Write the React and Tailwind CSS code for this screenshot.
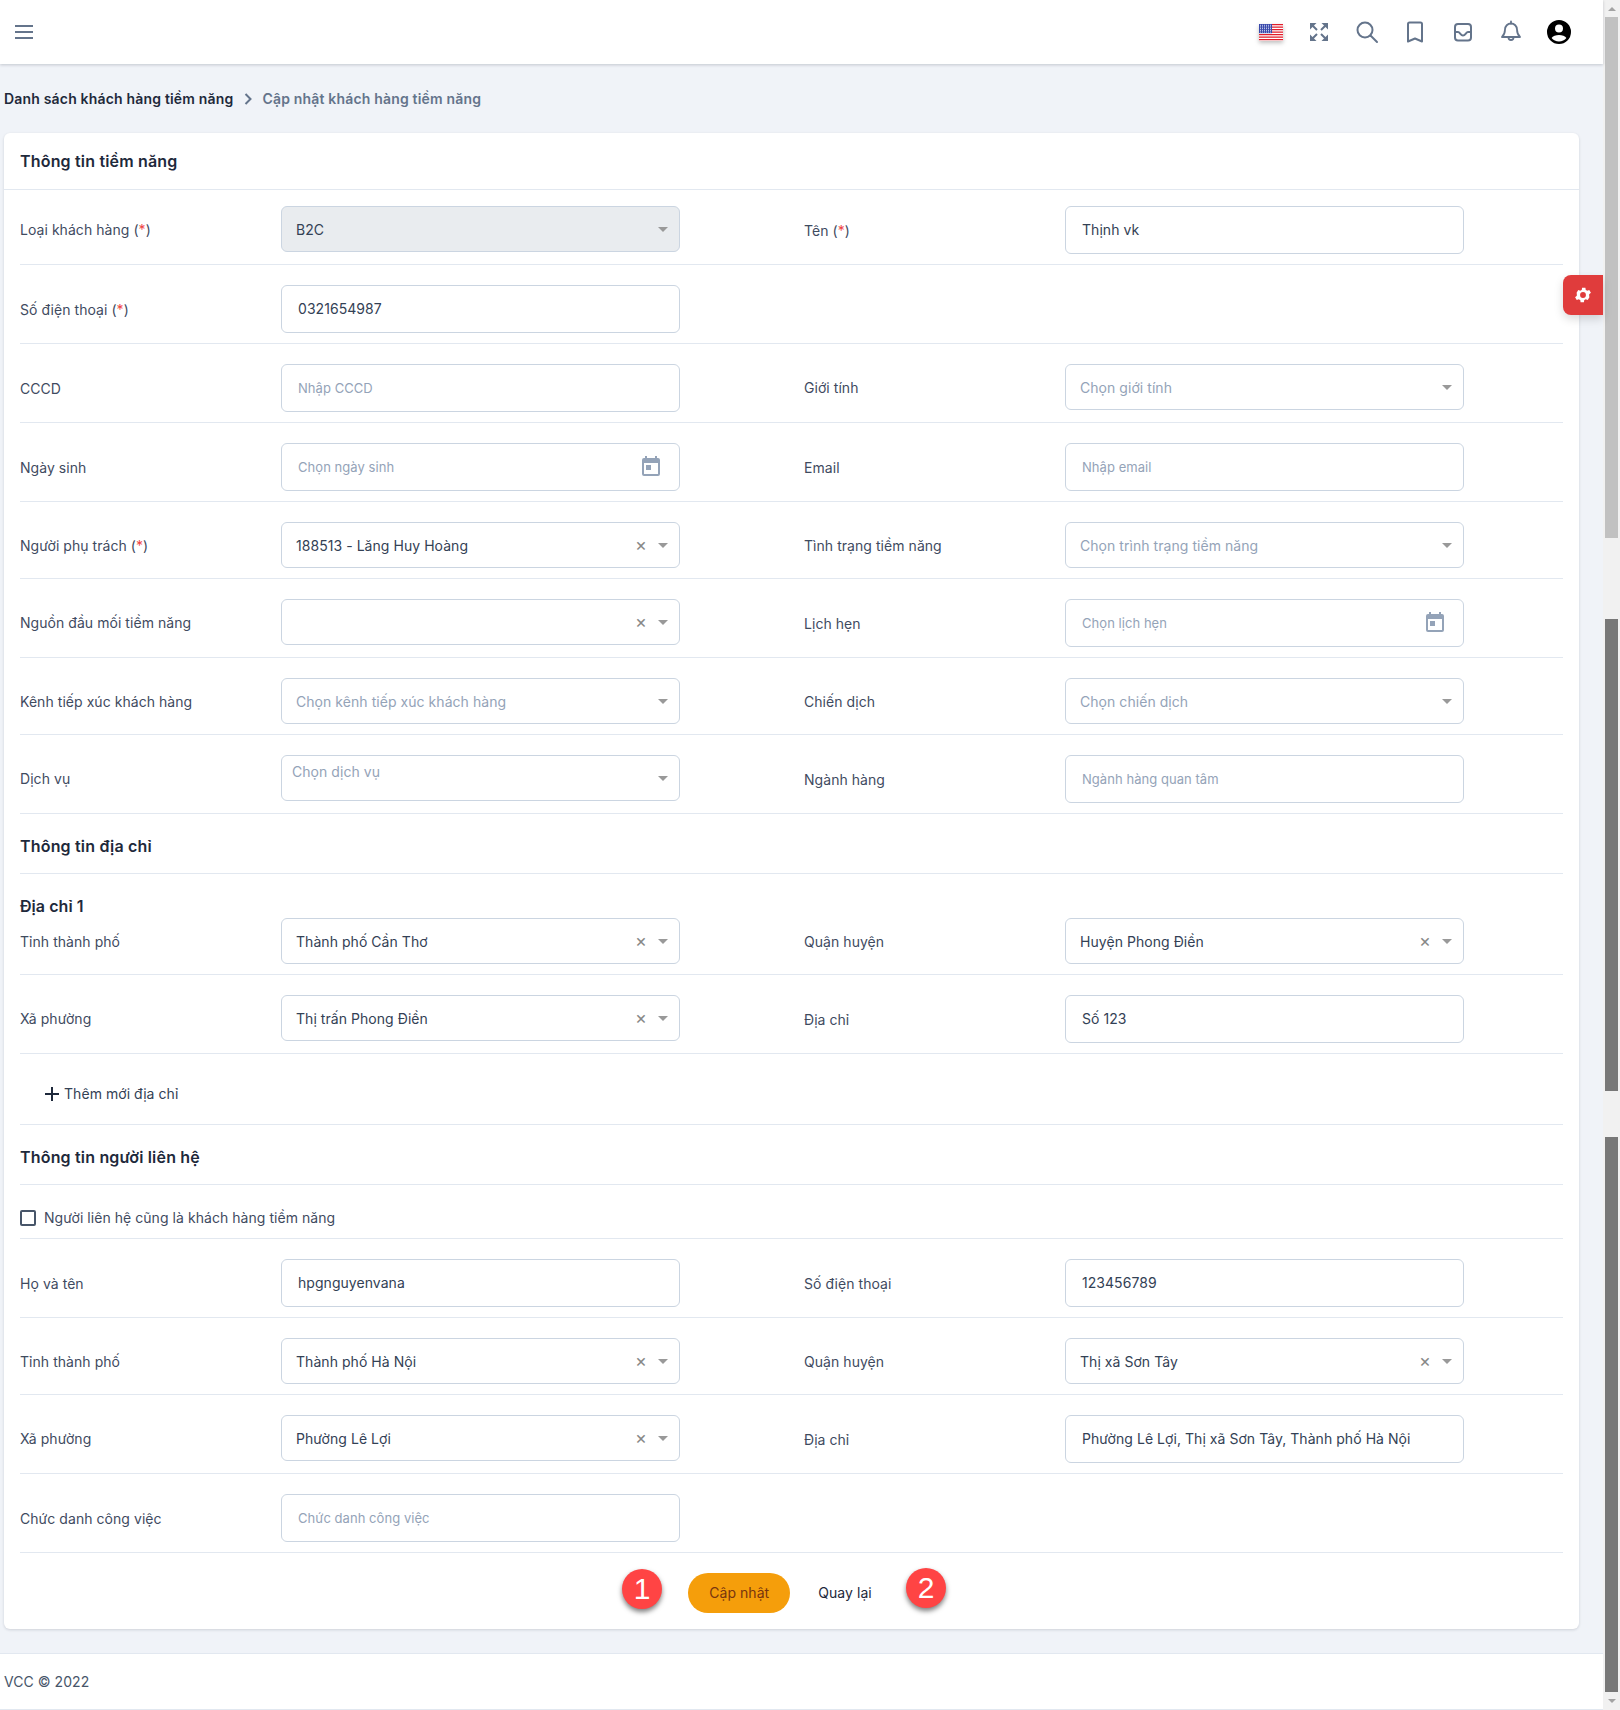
const caret = "w-0 h-0 border-x-[5px] border-x-transparent border-t-[5px] border-t-[#999] shrink-0";

function Req() {
  return <span>(<span className="text-[#ef4444]">*</span>)</span>;
}

function Calendar() {
  return (
    <svg viewBox="0 0 24 24" className="w-[24px] h-[24px] text-[#94a3b8]" fill="currentColor">
      <path d="M19 4h-1V2h-2v2H8V2H6v2H5a2 2 0 0 0-2 2v14a2 2 0 0 0 2 2h14a2 2 0 0 0 2-2V6a2 2 0 0 0-2-2zm0 16H5V9h14v11zM7 11h5v5H7z" />
    </svg>
  );
}

function Input({ value, placeholder, date }) {
  return (
    <div className="relative w-full">
      <input
        readOnly
        value={value || ""}
        placeholder={placeholder}
        className="block w-full h-12 rounded-md border border-[#cbd5e1] bg-white pl-4 pr-4 pb-[2px] text-sm tracking-[0.05px] text-[#334155] outline-none placeholder:text-[13px] placeholder:text-[#94a3b8]"
      />
      {date && (
        <div className="absolute right-[17px] top-[11px]">
          <Calendar />
        </div>
      )}
    </div>
  );
}

function Select({ value, placeholder, clear, disabled, multi }) {
  return (
    <div
      className={`relative flex h-[46px] w-full items-center rounded-md border border-[#cbd5e1] ${
        disabled ? "bg-[#e9ecef]" : "bg-white"
      } ${multi ? "pl-[10px]" : "pl-[14px]"} pr-[11px]`}
    >
      <span
        className={`flex-1 text-sm ${value ? "text-[#334155]" : "text-[#94a3b8]"} ${multi ? "-mt-[12px]" : "pt-[1px]"}`}
      >
        {value || placeholder}
      </span>
      {clear && <span className="mr-[11px] text-[18px] leading-none text-[#888]">×</span>}
      <span className={caret} />
    </div>
  );
}

function Cell({ label, children }) {
  return (
    <div className="grid grid-cols-[261px_399px] items-center">
      <div className="pt-0.5 text-sm text-[#3f4b5f]">{label}</div>
      <div>{children}</div>
    </div>
  );
}

function Row({ left, right, first }) {
  return (
    <div className={`grid grid-cols-[784px_1fr] items-start border-b border-[#e2e8f0] pb-2.5 ${first ? "pt-4" : "pt-5"}`}>
      {left}
      {right || <div />}
    </div>
  );
}

function SectionTitle({ children }) {
  return (
    <div className="flex h-[60px] items-center border-b border-[#e2e8f0] pt-[5px] text-base font-semibold tracking-[0.18px] text-[#1e293b]">
      {children}
    </div>
  );
}

function Icon({ children, className = "w-6 h-6", strokeWidth = "2" }) {
  return (
    <svg viewBox="0 0 24 24" className={className} fill="none" stroke="currentColor" strokeWidth={strokeWidth} strokeLinecap="round" strokeLinejoin="round">
      {children}
    </svg>
  );
}

function Flag() {
  const stripes = [];
  for (let i = 0; i < 7; i++) {
    stripes.push(<rect key={i} x="0" y={i * 2.5} width="24" height="1.25" fill="#e11d2a" />);
  }
  const dots = [];
  for (let r = 0; r < 5; r++) {
    for (let c = 0; c < 6; c++) {
      dots.push(<rect key={`${r}-${c}`} x={1 + c * 2} y={0.8 + r * 1.7} width="1" height="0.9" fill="#dbe2f5" />);
    }
  }
  return (
    <svg viewBox="0 0 24 17" className="h-[17px] w-6 drop-shadow-[0_2px_2px_rgba(0,0,0,0.25)]">
      <rect width="24" height="17" fill="#fff" />
      {stripes}
      <rect width="13" height="9.2" fill="#3949ab" />
      {dots}
    </svg>
  );
}

function Header() {
  const slot = "flex w-12 justify-center text-[#64748b]";
  return (
    <header className="flex h-16 shrink-0 items-center justify-between bg-white pl-[15px] pr-[20px] shadow-[0_1px_3px_rgba(15,23,42,0.2)]">
      <svg viewBox="0 0 18 14" className="h-[14px] w-[18px] text-[#64748b]" stroke="currentColor" strokeWidth="2">
        <path d="M0 1h18M0 7h18M0 13h18" />
      </svg>
      <div className="flex items-center">
        <div className={slot}><Flag /></div>
        <div className={slot}>
          <svg viewBox="0 0 18 18" className="h-[18px] w-[18px]" fill="currentColor" stroke="currentColor" strokeWidth="2">
            <path d="M0 0h6.500L0 6.500z" stroke="none" />
            <path d="M18 0h-6.500L18 6.500z" stroke="none" />
            <path d="M0 18h6.500L0 11.500z" stroke="none" />
            <path d="M18 18h-6.500L18 11.500z" stroke="none" />
            <path d="M2 2l5 5M16 2l-5 5M2 16l5-5M16 16l-5-5" fill="none" />
          </svg>
        </div>
        <div className={slot}>
          <Icon>
            <circle cx="10" cy="10" r="7.500" />
            <path d="M15.500 15.500l6.500 6.500" />
          </Icon>
        </div>
        <div className={slot}>
          <Icon>
            <path d="M5 21.500V4a1.500 1.500 0 0 1 1.500-1.500h11A1.500 1.500 0 0 1 19 4v17.500l-7-3z" />
          </Icon>
        </div>
        <div className={slot}>
          <Icon>
            <rect x="4" y="4" width="16" height="16.500" rx="3" />
            <path d="M4 12h3c2 0 2.500 3.500 5 3.500s3-3.500 5-3.500h3" />
          </Icon>
        </div>
        <div className={slot}>
          <Icon strokeWidth="1.8">
            <path d="M12 3.500a6 6 0 0 0-6 6c0 4.500-2 6.500-3 7.500h18c-1-1-3-3-3-7.500a6 6 0 0 0-6-6z" />
            <path d="M9.500 17.500a2.500 2.500 0 0 0 5 0M12 1.500v2" />
          </Icon>
        </div>
        <div className="flex w-12 justify-center">
          <svg viewBox="0 0 24 24" className="h-6 w-6" fill="#000">
            <path d="M12 0a12 12 0 1 0 0 24 12 12 0 0 0 0-24zm0 4.600a4 4 0 1 1 0 8 4 4 0 0 1 0-8zm0 17c-3 0-5.700-1.400-7.400-3.600 1-2 4.500-3.100 7.400-3.100s6.400 1.100 7.400 3.100c-1.700 2.200-4.400 3.600-7.400 3.600z" />
          </svg>
        </div>
      </div>
    </header>
  );
}

function Badge({ children, className }) {
  return (
    <div
      className={`absolute flex h-10 w-10 items-center justify-center rounded-full bg-[#ff4444] text-[30px] leading-none text-white shadow-[0_3px_5px_rgba(0,0,0,0.5)] [font-family:'Liberation_Sans',sans-serif] ${className}`}
    >
      {children}
    </div>
  );
}

function Scrollbar() {
  return (
    <div className="flex w-[17px] shrink-0 flex-col items-start bg-[#f1f1f1] pl-[2px]">
      <div className="flex h-[17px] w-[13px] items-center justify-center">
        <span className="h-0 w-0 border-x-[4px] border-b-[4px] border-x-transparent border-b-[#a3a3a3]" />
      </div>
      <div className="h-[521px] w-[13px] bg-[#c1c1c1]" />
      <div className="mt-[81px] h-[472px] w-[13px] bg-[#787878]" />
      <div className="mt-[46px] h-[555px] w-[13px] bg-[#787878]" />
      <div className="flex h-[17px] w-[13px] items-center justify-center">
        <span className="h-0 w-0 border-x-[4px] border-t-[4px] border-x-transparent border-t-[#a3a3a3]" />
      </div>
    </div>
  );
}

export default function App() {
  return (
    <div className="flex h-[1710px] w-full overflow-hidden bg-[#f0f3f8] text-sm tracking-[0.05px] [font-family:Inter,sans-serif]">
      <div className="relative flex min-w-0 flex-1 flex-col">
        <Header />

        <nav className="flex h-[69px] shrink-0 items-center pl-1 pt-[1px] text-sm font-semibold tracking-[0.18px]">
          <span className="text-[#1e293b]">Danh sách khách hàng tiềm năng</span>
          <svg viewBox="0 0 8 12" className="ml-[11px] mr-[10px] h-[12px] w-[8px] text-[#64748b]" fill="none" stroke="currentColor" strokeWidth="2">
            <path d="M1.500 1l5 5-5 5" />
          </svg>
          <span className="text-[#64748b]">Cập nhật khách hàng tiềm năng</span>
        </nav>

        <section className="ml-1 w-[1575px] rounded-md bg-white shadow-[0_1px_3px_rgba(15,23,42,0.15)]">
          <div className="flex h-[57px] items-center border-b border-[#e2e8f0] px-4 text-base font-semibold tracking-[0.18px] text-[#1e293b]">
            Thông tin tiềm năng
          </div>

          <div className="px-4">
            <Row
              first
              left={<Cell label={<>Loại khách hàng <Req /></>}><Select value="B2C" disabled /></Cell>}
              right={<Cell label={<>Tên <Req /></>}><Input value="Thịnh vk" /></Cell>}
            />
            <Row left={<Cell label={<>Số điện thoại <Req /></>}><Input value="0321654987" /></Cell>} />
            <Row
              left={<Cell label="CCCD"><Input placeholder="Nhập CCCD" /></Cell>}
              right={<Cell label="Giới tính"><Select placeholder="Chọn giới tính" /></Cell>}
            />
            <Row
              left={<Cell label="Ngày sinh"><Input placeholder="Chọn ngày sinh" date /></Cell>}
              right={<Cell label="Email"><Input placeholder="Nhập email" /></Cell>}
            />
            <Row
              left={<Cell label={<>Người phụ trách <Req /></>}><Select value="188513 - Lăng Huy Hoàng" clear /></Cell>}
              right={<Cell label="Tình trạng tiềm năng"><Select placeholder="Chọn trình trạng tiềm năng" /></Cell>}
            />
            <Row
              left={<Cell label="Nguồn đầu mối tiềm năng"><Select clear /></Cell>}
              right={<Cell label="Lịch hẹn"><Input placeholder="Chọn lịch hẹn" date /></Cell>}
            />
            <Row
              left={<Cell label="Kênh tiếp xúc khách hàng"><Select placeholder="Chọn kênh tiếp xúc khách hàng" /></Cell>}
              right={<Cell label="Chiến dịch"><Select placeholder="Chọn chiến dịch" /></Cell>}
            />
            <Row
              left={<Cell label="Dịch vụ"><Select placeholder="Chọn dịch vụ" multi /></Cell>}
              right={<Cell label="Ngành hàng"><Input placeholder="Ngành hàng quan tâm" /></Cell>}
            />

            <SectionTitle>Thông tin địa chỉ</SectionTitle>

            <div className="flex h-[44px] items-end text-base font-semibold text-[#1e293b]">Địa chỉ 1</div>
            <div className="grid grid-cols-[784px_1fr] items-start border-b border-[#e2e8f0] pb-2.5">
              <Cell label="Tỉnh thành phố"><Select value="Thành phố Cần Thơ" clear /></Cell>
              <Cell label="Quận huyện"><Select value="Huyện Phong Điền" clear /></Cell>
            </div>
            <Row
              left={<Cell label="Xã phường"><Select value="Thị trấn Phong Điền" clear /></Cell>}
              right={<Cell label="Địa chỉ"><Input value="Số 123" /></Cell>}
            />

            <div className="flex h-[71px] items-center gap-[5px] border-b border-[#e2e8f0] pl-[25px] pt-[10px] text-sm text-[#334155]">
              <svg viewBox="0 0 14 14" className="h-[14px] w-[14px] text-[#1e293b]" stroke="currentColor" strokeWidth="2">
                <path d="M7 0v14M0 7h14" />
              </svg>
              Thêm mới địa chỉ
            </div>

            <SectionTitle>Thông tin người liên hệ</SectionTitle>

            <label className="flex h-[54px] items-center gap-[8px] border-b border-[#e2e8f0] pt-[12px] text-sm text-[#3f4b5f]">
              <span className="h-4 w-4 rounded-[2px] border-2 border-[#475569] bg-white" />
              Người liên hệ cũng là khách hàng tiềm năng
            </label>

            <Row
              left={<Cell label="Họ và tên"><Input value="hpgnguyenvana" /></Cell>}
              right={<Cell label="Số điện thoại"><Input value="123456789" /></Cell>}
            />
            <Row
              left={<Cell label="Tỉnh thành phố"><Select value="Thành phố Hà Nội" clear /></Cell>}
              right={<Cell label="Quận huyện"><Select value="Thị xã Sơn Tây" clear /></Cell>}
            />
            <Row
              left={<Cell label="Xã phường"><Select value="Phường Lê Lợi" clear /></Cell>}
              right={<Cell label="Địa chỉ"><Input value="Phường Lê Lợi, Thị xã Sơn Tây, Thành phố Hà Nội" /></Cell>}
            />
            <Row left={<Cell label="Chức danh công việc"><Input placeholder="Chức danh công việc" /></Cell>} />

            <div className="relative flex h-[76px] items-center justify-center gap-[28px] pr-[23px] pt-[4px]">
              <Badge className="left-[602px] top-[16px]">1</Badge>
              <button className="h-10 w-[102px] rounded-full bg-[#f59e0b] text-sm text-[#78350f]">Cập nhật</button>
              <button className="text-sm text-[#1e293b]">Quay lại</button>
              <Badge className="left-[886px] top-[15px]">2</Badge>
            </div>
          </div>
        </section>

        <footer className="mt-[24px] flex flex-1 items-center border-y border-[#e2e8f0] bg-white pl-1 text-sm text-[#475569]">
          VCC © 2022
        </footer>

        <div className="absolute right-0 top-[275px] flex h-10 w-10 items-center justify-center rounded-l-lg bg-[#e03c3c] shadow-[0_4px_10px_rgba(0,0,0,0.15)]">
          <svg viewBox="0 0 24 24" className="h-[20px] w-[20px]" fill="#fff">
            <path d="M19.4 13a7.500 7.500 0 0 0 0-2l2.100-1.600-2-3.500-2.500 1a7.500 7.500 0 0 0-1.700-1l-.4-2.700h-4l-.4 2.700a7.500 7.500 0 0 0-1.700 1l-2.500-1-2 3.500L4.600 11a7.500 7.500 0 0 0 0 2l-2.100 1.600 2 3.500 2.500-1a7.500 7.500 0 0 0 1.700 1l.4 2.700h4l.4-2.700a7.500 7.500 0 0 0 1.700-1l2.500 1 2-3.500zM12 15.500a3.500 3.500 0 1 1 0-7 3.500 3.500 0 0 1 0 7z" />
          </svg>
        </div>
      </div>
      <Scrollbar />
    </div>
  );
}
